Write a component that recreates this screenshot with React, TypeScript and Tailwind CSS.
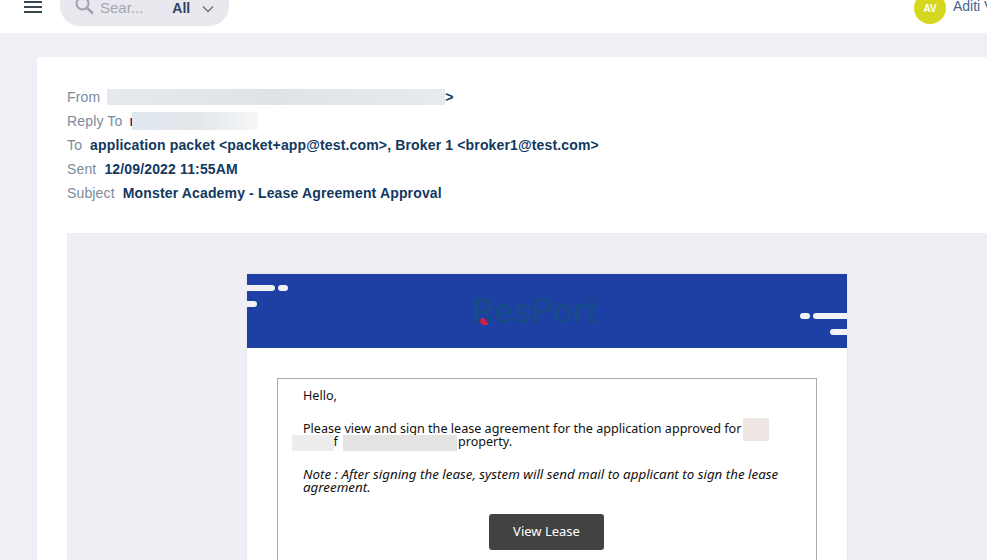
function Blur({ className }: { className: string }) {
  return <span className={`inline-block ${className}`} />;
}

const labelCls = "text-[#7c8a9c]";
const valueCls = "font-bold text-[#12385f]";

export default function App() {
  return (
    <div className="h-[560px] w-[987px] overflow-hidden bg-[#eff0f5] font-['Liberation_Sans',sans-serif]">
      {/* Top bar */}
      <div className="flex h-[33px] items-end bg-white pb-[7px]">
        <div className="mb-[13px] ml-[24px] flex w-[18px] shrink-0 flex-col gap-[3px]">
          <span className="h-[2px] bg-[#36474f]" />
          <span className="h-[2px] bg-[#36474f]" />
          <span className="h-[2px] bg-[#36474f]" />
        </div>
        <div className="ml-[18px] flex h-[40px] w-[169px] shrink-0 items-end rounded-b-[20px] bg-[#e9e8ee] pb-[10px] pl-[15px]">
          <svg className="mb-[1px] h-[19px] w-[19px] shrink-0 text-[#a0a3b1]" viewBox="0 0 19 19" fill="none" stroke="currentColor">
            <circle cx="7.5" cy="7.5" r="6" strokeWidth="2" />
            <path d="M12 12l6 5.5" strokeWidth="2.6" />
          </svg>
          <span className="ml-[6px] text-[15px] leading-[16px] text-[#a3a6b4]">Sear...</span>
          <span className="ml-[29px] text-[14px] font-bold leading-[16px] text-[#2f4460]">All</span>
          <svg className="mb-[1px] ml-[12px] h-[12px] w-[12px] shrink-0 text-[#6d7480]" viewBox="0 0 12 12" fill="none" stroke="currentColor" strokeWidth="1.5">
            <path d="M1 3.5l5 5 5-5" />
          </svg>
        </div>
        <div className="mb-[2px] ml-[685px] flex h-[32px] w-[32px] shrink-0 items-center justify-center rounded-full bg-[#d6d71f] text-[10px] font-bold text-white">
          AV
        </div>
        <span className="mb-[12px] ml-[7px] whitespace-nowrap text-[14px] leading-[16px] text-[#44648c]">Aditi V</span>
      </div>

      {/* Email card */}
      <div className="ml-[37px] mt-[24px] w-[990px] rounded-t-[4px] bg-white pl-[30px] pt-[28px]">
        <div className="text-[14px] leading-[24px] tracking-[0.15px]">
          <div className="flex items-center">
            <span className={labelCls}>From</span>
            <Blur className="ml-[7px] h-[16px] w-[338px] bg-gradient-to-r from-[#e6eaee] via-[#dfe3e7] to-[#e8ebee]" />
            <span className={valueCls}>&gt;</span>
          </div>
          <div className="flex items-center">
            <span className={labelCls}>Reply To</span>
            <span className={`ml-[7px] ${valueCls}`}>r</span>
            <Blur className="relative -ml-[3px] h-[18px] w-[126px] bg-gradient-to-r from-[#dfe8f0] via-[#e2e6ea] to-[#f6f7f8]" />
          </div>
          <div>
            <span className={labelCls}>To</span>
            <span className={`ml-[8px] ${valueCls}`}>application packet &lt;packet+app@test.com&gt;, Broker 1 &lt;broker1@test.com&gt;</span>
          </div>
          <div>
            <span className={labelCls}>Sent</span>
            <span className={`ml-[8px] ${valueCls}`}>12/09/2022 11:55AM</span>
          </div>
          <div>
            <span className={labelCls}>Subject</span>
            <span className={`ml-[8px] ${valueCls}`}>Monster Academy - Lease Agreement Approval</span>
          </div>
        </div>

        {/* Message panel */}
        <div className="mt-[28px] bg-[#efeef4] pt-[41px]">
          <div className="mx-auto w-[600px] bg-white shadow-[0_0_2px_#dddddd]">
            <div className="relative flex h-[74px] items-center justify-center bg-[#1e3fa3] pr-[24px] pt-[2px]">
              <svg className="absolute left-0 top-[11px] h-[24px] w-[42px]" viewBox="0 0 42 24" fill="#f2f2f6">
                <path d="M0 0h25a3 3 0 0 1 0 6H0z" />
                <rect x="31" y="0" width="10" height="6" rx="3" />
                <path d="M0 16h7a3 3 0 0 1 0 6H0z" />
              </svg>
              <svg className="absolute bottom-[11px] right-0 h-[24px] w-[48px]" viewBox="0 0 48 24" fill="#f2f2f6">
                <rect x="1" y="0" width="10" height="6" rx="3" />
                <path d="M48 0H17a3 3 0 0 0 0 6h31z" />
                <path d="M48 16H34a3 3 0 0 0 0 6h14z" />
              </svg>
              <span className="relative font-['Roboto',sans-serif] text-[35px] font-medium leading-[40px] text-[#174b8c]">
                ResPort
                <svg className="absolute bottom-[7px] left-[7px] h-[7px] w-[9px]" viewBox="0 0 9 7" fill="#d3213f">
                  <path d="M2 0h3l4 5v2H4L1 4z" />
                </svg>
              </span>
            </div>

            <div className="px-[30px] pt-[30px]">
              <div className="border border-[#aaaaaa] px-[25px] pb-[60px] pt-[10px] font-['Noto_Sans',sans-serif] text-[12.6px] leading-[13px] text-[#111111]">
                <p>Hello,</p>
                <p className="mt-[20px] whitespace-nowrap">
                  Please view and sign the lease agreement for the application approved for
                  <Blur className="-my-[6px] ml-[2px] h-[23px] w-[26px] bg-[#eee7e4] align-middle" />
                  <br />
                  <Blur className="relative -my-[4px] -ml-[11px] -mr-[8px] h-[16px] w-[42px] bg-[#ededed] align-middle" />
                  <span>of</span>
                  <Blur className="-my-[4px] ml-[5px] h-[16px] w-[114px] bg-[#e3e3e2] align-middle" />
                  <span className="ml-[1px]">property.</span>
                </p>
                <p className="mt-[20px] text-[13.35px] italic">
                  Note : After signing the lease, system will send mail to applicant to sign the lease agreement.
                </p>
                <div className="mt-[20px] flex justify-center">
                  <button className="mr-[2px] h-[36px] w-[115px] rounded-[3px] bg-[#424242] pb-[2px] pl-[1px] text-[13px] text-white">View Lease</button>
                </div>
              </div>
            </div>
          </div>
        </div>
      </div>
    </div>
  );
}
